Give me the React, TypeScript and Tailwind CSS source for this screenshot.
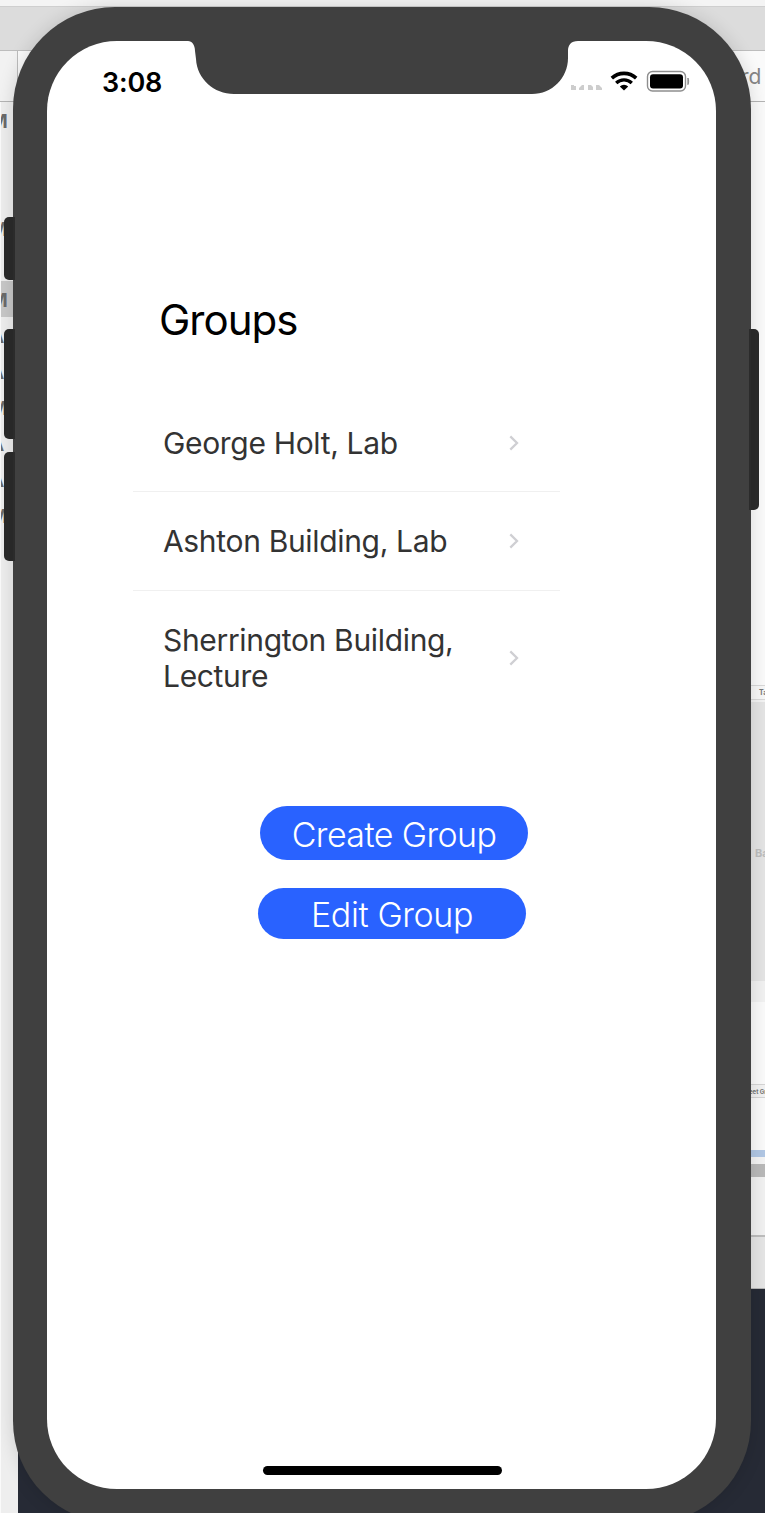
import React from "react";

const FONT = "font-['Inter','Liberation_Sans',sans-serif]";

const groups = [
  { name: "George Holt, Lab", row: "h-[99px] border-b pt-px" },
  { name: "Ashton Building, Lab", row: "h-[99px] border-b" },
  { name: "Sherrington Building, Lecture", row: "h-[134px]" },
];

function Chevron() {
  return (
    <svg className="h-[16px] w-[10px] shrink-0" viewBox="0 0 10 16" fill="none">
      <path d="M1.3 1.4 8 8 1.3 14.6" stroke="#cfcfd3" strokeWidth="2.3" />
    </svg>
  );
}

function SidebarGlyph({ letter, className }: { letter: string; className: string }) {
  return (
    <div className={`flex w-[14px] items-center overflow-hidden pt-[3px] ${className}`}>
      <span className="ml-[-11px] text-[19px] font-bold leading-none text-[#6b6b6b]">{letter}</span>
    </div>
  );
}

function Desktop() {
  return (
    <div className="flex h-full w-full flex-col bg-[#262a35]">
      <div className="h-[7px] shrink-0 border-b border-[#cfcfcf] bg-[#f4f4f4]" />
      <div className="h-[44px] shrink-0 border-b border-[#bdbdbd] bg-[#dcdcdc]" />
      <div className="flex h-[51px] shrink-0 justify-between border-b border-[#b4b4b4] bg-[#fafafa]">
        <div className="w-[18px] border-r border-[#bcbcbc] bg-[#f2f2f2]" />
        <div className="flex w-[24px] items-center pt-[1px] text-[21px] text-[#868686]">
          <span>rd</span>
        </div>
      </div>
      <div className="flex min-h-0 flex-1 justify-between">
        <div className="w-[18px] border-l border-[#fafafa] bg-[#eeeeee]">
          <SidebarGlyph letter="M" className="h-[36px]" />
          <div className="h-[72px]" />
          <SidebarGlyph letter="M" className="h-[36px]" />
          <div className="h-[35px]" />
          <SidebarGlyph letter="M" className="h-[36px] bg-[#c8c8c8]" />
          <SidebarGlyph letter="A" className="h-[36px]" />
          <SidebarGlyph letter="A" className="h-[36px]" />
          <SidebarGlyph letter="M" className="h-[36px]" />
          <SidebarGlyph letter="A" className="h-[36px]" />
          <SidebarGlyph letter="A" className="h-[36px]" />
          <SidebarGlyph letter="M" className="h-[36px]" />
        </div>
        <div className="flex w-[16px] flex-col overflow-hidden">
          <div className="h-[583px] shrink-0 bg-[#fafafa]" />
          <div className="flex h-[15px] shrink-0 items-center border-y border-[#d8d8d8] bg-[#f7f7f7] pl-[10px] pt-[2px] text-[7px] font-bold text-[#777]">
            Ta
          </div>
          <div className="h-[2px] shrink-0 bg-[#f3f3f3]" />
          <div className="flex h-[279px] shrink-0 items-center bg-[#e4e4e4] pb-px pt-[25px] text-[11px] font-bold text-[#bdbdbd]">
            <span className="ml-[6px]">Ba</span>
          </div>
          <div className="h-[21px] shrink-0 bg-[#f1f1f1]" />
          <div className="h-[82px] shrink-0 bg-[#fafafa]" />
          <div className="flex h-[14px] shrink-0 items-center whitespace-nowrap border-y border-[#d5d5d5] bg-[#f2f2f2] text-[6px] font-bold text-[#777]">
            eet Gr
          </div>
          <div className="flex h-[52px] shrink-0 items-center bg-[#fafafa]">
            <div className="h-[8px] w-[2px] bg-[#aaa]" />
          </div>
          <div className="h-[7px] shrink-0 bg-[#b1c7e4]" />
          <div className="h-[7px] shrink-0 bg-[#f4f4f4]" />
          <div className="h-[13px] shrink-0 bg-[#b9b9b9]" />
          <div className="h-[60px] shrink-0 border-b-2 border-[#bdbdbd] bg-[#f1f1f1]" />
          <div className="h-[52px] shrink-0 border-b border-[#b5b5b5] bg-[#e5e5e5]" />
        </div>
      </div>
    </div>
  );
}

function StatusBar() {
  return (
    <div className="flex h-[82px] shrink-0 justify-between pl-[55px] pr-[26px]">
      <span className="mt-[24px] text-[27px] font-semibold leading-[35px] tracking-[-0.2px] text-black">3:08</span>
      <div className="mt-[28px] flex h-[24px] items-center">
        <svg className="h-[24px] w-[31px]" viewBox="0 0 31 24" fill="#cdcdcd">
          <path d="M0 16h3v1h2v4H0zM8 19l3-3h2v5H8zM17 16h3l2 2v3h-5zM25 16h3l3 3v2h-6z" />
        </svg>
        <svg className="ml-[8px] h-[22px] w-[28px]" viewBox="0 0 28 22" fill="none" stroke="#000">
          <path d="M1.8 8.1a18 18 0 0 1 24.4 0" strokeWidth="3.6" />
          <path d="M6.2 12.9a11.5 11.5 0 0 1 15.6 0" strokeWidth="3.4" />
          <path d="m14 20.6-4.2-4.1a6.2 6.2 0 0 1 8.4 0Z" fill="#000" stroke="none" />
        </svg>
        <svg className="ml-[8px] h-[22px] w-[44px]" viewBox="0 0 44 22">
          <rect x="1.5" y="1.5" width="38" height="19.5" rx="5" fill="none" stroke="#8e8e8e" strokeWidth="1.4" />
          <rect x="4" y="4.2" width="33" height="14.4" rx="3" />
          <path d="M41.9 8c1 .6 1 6 0 6.6Z" fill="#8e8e8e" stroke="#8e8e8e" />
        </svg>
      </div>
    </div>
  );
}

function GroupList() {
  return (
    <ul className="ml-[86px] mt-[48px] w-[427px]">
      {groups.map((g) => (
        <li
          key={g.name}
          className={`flex items-center justify-between border-[#f0f0f0] pl-[30px] pr-[41px] ${g.row}`}
        >
          <span className="w-[300px] text-[30px] leading-[36px] tracking-[-0.33px] text-[#333333]">{g.name}</span>
          <Chevron />
        </li>
      ))}
    </ul>
  );
}

function Phone() {
  return (
    <div className="absolute left-[13px] top-[7px] h-[1516px] w-[738px]">
      <div className="absolute left-[-9px] top-[210px] h-[63px] w-[20px] rounded-[5px] bg-[#2b2b2b]" />
      <div className="absolute left-[-9px] top-[322px] h-[110px] w-[20px] rounded-[5px] bg-[#2b2b2b]" />
      <div className="absolute left-[-9px] top-[445px] h-[109px] w-[20px] rounded-[5px] bg-[#2b2b2b]" />
      <div className="absolute right-[-8px] top-[322px] h-[181px] w-[20px] rounded-[5px] bg-[#2b2b2b]" />
      <div className="relative h-full w-full rounded-[102px] bg-[#404040] pl-[34px] pr-[35px] pt-[34px] shadow-[0_0_18px_rgba(0,0,0,0.14)]">
        <div className="absolute left-0 top-[210px] h-[63px] w-[2px] bg-[#2b2b2b]" />
        <div className="absolute left-0 top-[322px] h-[110px] w-[2px] bg-[#2b2b2b]" />
        <div className="absolute left-0 top-[445px] h-[109px] w-[2px] bg-[#2b2b2b]" />
        <div className="absolute right-0 top-[322px] h-[181px] w-[2px] bg-[#2b2b2b]" />
        <main className="relative flex h-[1448px] w-[669px] flex-col overflow-hidden rounded-[70px] bg-white">
          <svg className="absolute left-[141px] top-0 h-[54px] w-[390px]" viewBox="0 0 390 54" fill="#404040">
            <path d="M0 0H390C383 0 380 4 380 10V17C380 37 364 53 344 53H46C26 53 9 38 8 18L7 10C7 4 4 0 0 0Z" />
          </svg>
          <StatusBar />
          <h1 className="ml-[112px] mt-[172px] text-[42px] leading-[50px] tracking-[-1px] text-black">Groups</h1>
          <GroupList />
          <div className="ml-[211px] mt-[81px] flex w-[270px] flex-col gap-[28px]">
            <button className="ml-[2px] flex h-[54px] w-[268px] items-center justify-center rounded-full bg-[#2962ff] pt-[3px] text-[34px] font-light leading-none text-white">
              <span className="tracking-[-0.6px]">Create Group</span>
            </button>
            <button className="flex h-[51px] w-[268px] items-center justify-center rounded-full bg-[#2962ff] pt-[3px] text-[34px] font-light leading-none text-white">
              <span className="tracking-[-0.4px]">Edit Group</span>
            </button>
          </div>
          <div className="mb-[14px] ml-[216px] mt-auto h-[9px] w-[239px] rounded-full bg-black" />
        </main>
      </div>
    </div>
  );
}

export default function App() {
  return (
    <div className={`relative h-[1513px] w-[765px] overflow-hidden ${FONT}`}>
      <Desktop />
      <Phone />
    </div>
  );
}
